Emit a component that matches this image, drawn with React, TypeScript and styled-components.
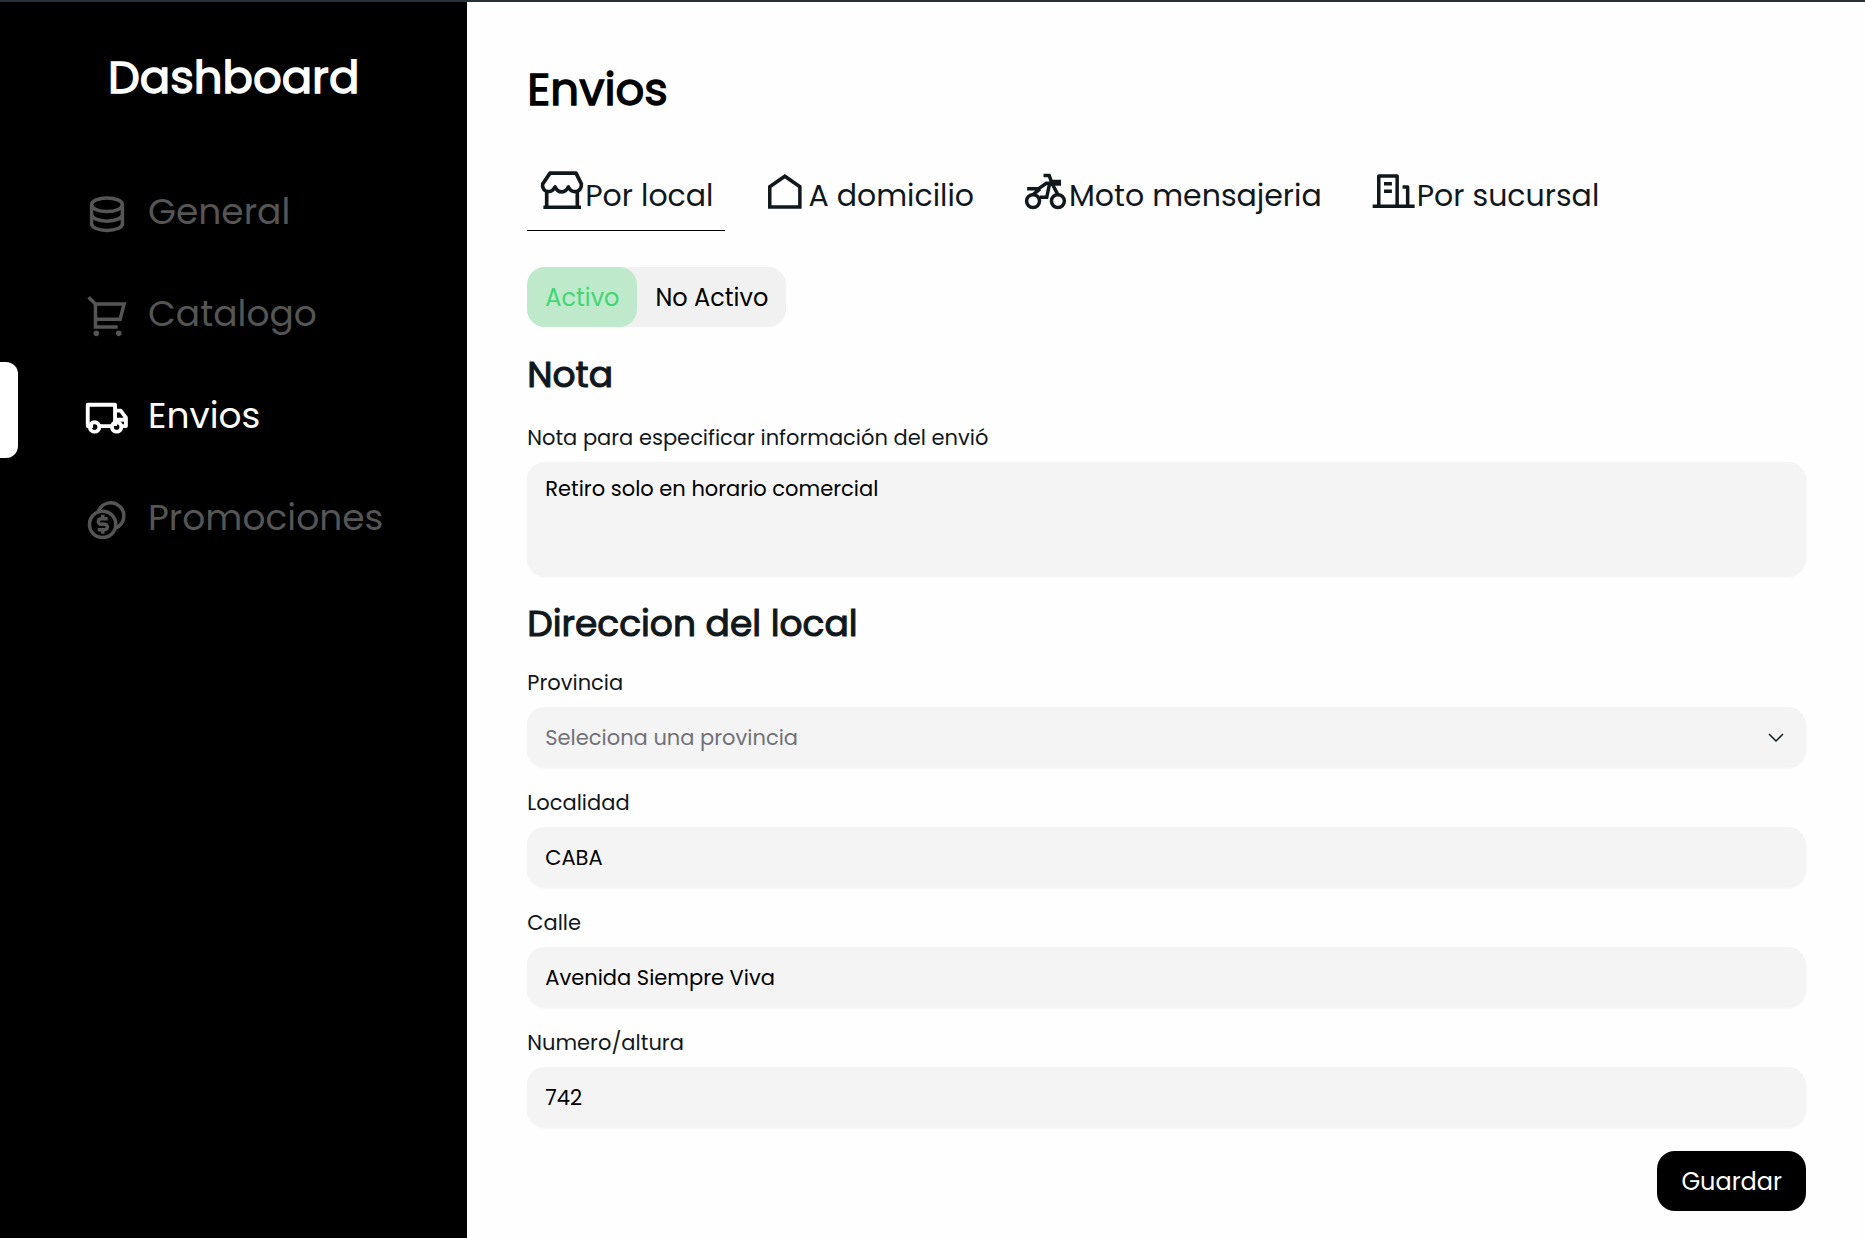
import React, { useState } from 'react';
import styled, { createGlobalStyle, css } from 'styled-components';

const Global = createGlobalStyle`
  *, *::before, *::after { box-sizing: border-box; }
  body { margin: 0; background: #fefefe; color: #11181c; font-family: Poppins, Inter, "Open Sans", sans-serif; }
  button, input, select, textarea { font: inherit; }
  h1, h2, p { margin: 0; }
`;

const heavy = css`
  font-weight: 400;
  -webkit-text-stroke: 0.03em currentColor;
`;

const shadow = css`
  box-shadow: 0 1px 2px rgba(0, 0, 0, 0.05);
`;

const Page = styled.div`
  display: grid;
  grid-template-columns: calc(25% + 1px) 1fr;
  min-height: 100vh;
  border-top: 2px solid #263238;
`;

const Sidebar = styled.aside`
  background: #000;
  padding-top: 41px;
`;

const Brand = styled.p`
  ${heavy}
  color: #fff;
  font-size: 45px;
  line-height: 70px;
  text-align: center;
`;

const Nav = styled.nav`
  display: flex;
  flex-direction: column;
  gap: 6px;
  padding-top: 45px;
`;

const NavLink = styled.a<{ $active?: boolean }>`
  display: flex;
  align-items: center;
  gap: 20px;
  height: 96px;
  color: ${p => (p.$active ? '#fff' : '#555')};
  font-size: 36px;
  text-decoration: none;
  &::before {
    content: '';
    width: 18px;
    height: 100%;
    margin-right: 48px;
    border-radius: 0 12px 12px 0;
    background: ${p => (p.$active ? '#fff' : 'transparent')};
  }
  & > svg { margin-top: 16px; }
`;

const NavText = styled.span`
  padding-top: 10px;
`;

const Main = styled.main`
  padding: 52px 59px 26px 60px;
`;

const Title = styled.h1`
  ${heavy}
  color: #000;
  font-size: 45px;
  line-height: 72px;
`;

const Tabs = styled.div`
  display: flex;
  gap: 27px;
  padding-top: 22px;
`;

const Tab = styled.button<{ $active?: boolean }>`
  display: flex;
  align-items: center;
  gap: 2px;
  height: 83px;
  padding: 6px 12px 0;
  border: 0;
  border-bottom: 1px solid ${p => (p.$active ? '#000' : 'transparent')};
  background: none;
  color: #11181c;
  font-size: 30px;
`;

const TabText = styled.span`
  padding-top: 8px;
`;

const Toggle = styled.div`
  display: inline-flex;
  margin-top: 36px;
  border-radius: 18px;
  background: #f1f1f1;
`;

const ToggleButton = styled.button<{ $on?: boolean }>`
  height: 60px;
  padding: 0 18px;
  border: 0;
  border-radius: 18px;
  background: ${p => (p.$on ? '#bfe9cb' : 'transparent')};
  color: ${p => (p.$on ? '#42d674' : '#000')};
  font-size: 24px;
`;

const Section = styled.h2`
  ${heavy}
  padding-top: 21px;
  font-size: 36px;
  line-height: 54px;
`;

const Field = styled.div<{ $spaced?: boolean }>`
  display: flex;
  flex-direction: column;
  gap: 8px;
  padding-top: ${p => (p.$spaced ? 20 : 16)}px;
`;

const Fields = styled.div`
  display: flex;
  flex-direction: column;
  gap: 4px;
`;

const Label = styled.label`
  font-size: 21px;
  line-height: 32px;
`;

const Input = styled.input`
  ${shadow}
  height: 60px;
  padding: 0 18px;
  border: 0;
  border-radius: 18px;
  background: #f4f4f4;
  color: #000;
  font-size: 21px;
`;

const Area = styled.textarea`
  ${shadow}
  height: 114px;
  padding: 11px 18px;
  border: 0;
  border-radius: 18px;
  background: #f4f4f4;
  color: #000;
  font-size: 21px;
  line-height: 32px;
  resize: none;
`;

const Select = styled.select`
  ${shadow}
  width: 100%;
  height: 60px;
  padding: 0 18px;
  border: 0;
  border-radius: 18px;
  appearance: none;
  background: #f4f4f4;
  color: #71717a;
  font-size: 21px;
`;

const SelectBox = styled.div`
  display: grid;
  align-items: center;
  & > * { grid-area: 1 / 1; }
  & > svg { justify-self: end; margin-right: 18px; pointer-events: none; }
`;

const Footer = styled.div`
  display: flex;
  justify-content: flex-end;
  padding-top: 24px;
`;

const Save = styled.button`
  height: 60px;
  padding: 0 24px;
  border: 0;
  border-radius: 18px;
  background: #000;
  color: #fff;
  font-size: 24px;
`;

const Svg = styled.svg`
  flex: none;
  overflow: visible;
`;

const Icon = ({ children, size = 42, stroke = 2 }: { children: React.ReactNode; size?: number; stroke?: number }) => (
  <Svg width={size} height={size} viewBox="0 0 24 24" fill="none" stroke="currentColor" strokeWidth={stroke} aria-hidden="true">
    {children}
  </Svg>
);

const DatabaseIcon = () => (
  <Icon>
    <ellipse cx="12" cy="6.7" rx="8.8" ry="3.9" />
    <path d="M3.2 6.7v10.8c0 2.2 3.9 3.9 8.8 3.9s8.8-1.7 8.8-3.9V6.7M3.2 12.2c0 2.2 3.9 3.9 8.8 3.9s8.8-1.7 8.8-3.9" />
  </Icon>
);

const CartIcon = () => (
  <Icon>
    <path d="M1.5 1.3l3.9 3.8v13.2h12.7M5.4 5.1h16.4l-2.3 8.800H5.4" />
    <circle cx="5.9" cy="21.9" r="1.6" fill="currentColor" stroke="none" />
    <circle cx="18.7" cy="21.9" r="1.6" fill="currentColor" stroke="none" />
  </Icon>
);

const TruckIcon = () => (
  <Icon stroke={2.2}>
    <path d="M4 16.6H1V4.4h15.600v12.200M7.5 16.6h7.600M16.6 7.8h3.200l3 4v4.800h-3M16.6 13h6" strokeLinejoin="round" />
    <circle cx="4.9" cy="17.1" r="2.7" />
    <circle cx="17.5" cy="17.1" r="2.7" />
  </Icon>
);

const CoinsIcon = () => (
  <Icon>
    <circle cx="9.5" cy="14.5" r="7.5" />
    <path d="M7.1 7A7.5 7.5 0 1 1 17 16.6" />
    <path d="M12.4 11.3H8.6a1.55 1.55 0 0 0 0 3.1h2a1.6 1.6 0 0 1 0 3.2H6.7M9.6 9v2.3M9.6 17.6v2.3" />
  </Icon>
);

const StoreIcon = () => (
  <Icon size={44}>
    <path
      strokeLinejoin="round"
      d="M6 1.7h14.2l2.9 5.9c.3 2.2-1.2 4.2-3.4 4.2-1.7 0-3-1-3.7-2.6-.7 1.7-2 2.7-3.6 2.7s-2.9-1-3.7-2.7c-.7 1.6-2 2.6-3.7 2.6C3 11.8 1.5 9.8 2 7.6zM4.2 11.4v8.9M20.9 11.4v8.9M2.4 20.3h20.500"
    />
  </Icon>
);

const HomeIcon = () => (
  <Icon>
    <path d="M3.300 9l8.600-6 8.600 6v11.600H3.300z" />
  </Icon>
);

const MotorbikeIcon = () => (
  <Icon>
    <circle cx="4.600" cy="17.200" r="3.700" />
    <circle cx="18.800" cy="17.200" r="3.700" />
    <path d="M10.600 2.500h3.200l1.800 5 3.200 6M1.200 10.200h6.400l4.600-3.200h4M4.600 13.500l4-3.300M14 7.500l-1.600 7.500h-4" />
    <path d="M14.800 5h5.800v3.400h-5.800z" fill="currentColor" stroke="none" />
  </Icon>
);

const BuildingIcon = () => (
  <Icon>
    <path d="M3.300 20V2.900h10.500V20M-.2 20.200h24M6.300 7.300h4.500M6.300 11.600h4.500M16.900 9.200h2.900v11" strokeLinejoin="round" />
  </Icon>
);

export default function App() {
  const [on, setOn] = useState(true);
  return (
    <>
      <Global />
      <Page>
        <Sidebar>
          <Brand>Dashboard</Brand>
          <Nav>
            <NavLink href="#general"><DatabaseIcon /><NavText>General</NavText></NavLink>
            <NavLink href="#catalogo"><CartIcon /><NavText>Catalogo</NavText></NavLink>
            <NavLink href="#envios" $active><TruckIcon /><NavText>Envios</NavText></NavLink>
            <NavLink href="#promociones"><CoinsIcon /><NavText>Promociones</NavText></NavLink>
          </Nav>
        </Sidebar>
        <Main>
          <Title>Envios</Title>
          <Tabs>
            <Tab $active><StoreIcon /><TabText>Por local</TabText></Tab>
            <Tab><HomeIcon /><TabText>A domicilio</TabText></Tab>
            <Tab><MotorbikeIcon /><TabText>Moto mensajeria</TabText></Tab>
            <Tab><BuildingIcon /><TabText>Por sucursal</TabText></Tab>
          </Tabs>
          <Toggle>
            <ToggleButton $on={on} onClick={() => setOn(true)}>Activo</ToggleButton>
            <ToggleButton $on={!on} onClick={() => setOn(false)}>No Activo</ToggleButton>
          </Toggle>
          <Section>Nota</Section>
          <Field $spaced>
            <Label htmlFor="nota">Nota para especificar información del envió</Label>
            <Area id="nota" defaultValue="Retiro solo en horario comercial" />
          </Field>
          <Section>Direccion del local</Section>
          <Fields>
            <Field>
              <Label htmlFor="provincia">Provincia</Label>
              <SelectBox>
                <Select id="provincia"><option>Seleciona una provincia</option></Select>
                <Icon size={24} stroke={1.5}><path d="M5 9l7 7 7-7" /></Icon>
              </SelectBox>
            </Field>
            <Field>
              <Label htmlFor="localidad">Localidad</Label>
              <Input id="localidad" defaultValue="CABA" />
            </Field>
            <Field>
              <Label htmlFor="calle">Calle</Label>
              <Input id="calle" defaultValue="Avenida Siempre Viva" />
            </Field>
            <Field>
              <Label htmlFor="numero">Numero/altura</Label>
              <Input id="numero" defaultValue="742" />
            </Field>
          </Fields>
          <Footer><Save>Guardar</Save></Footer>
        </Main>
      </Page>
    </>
  );
}
